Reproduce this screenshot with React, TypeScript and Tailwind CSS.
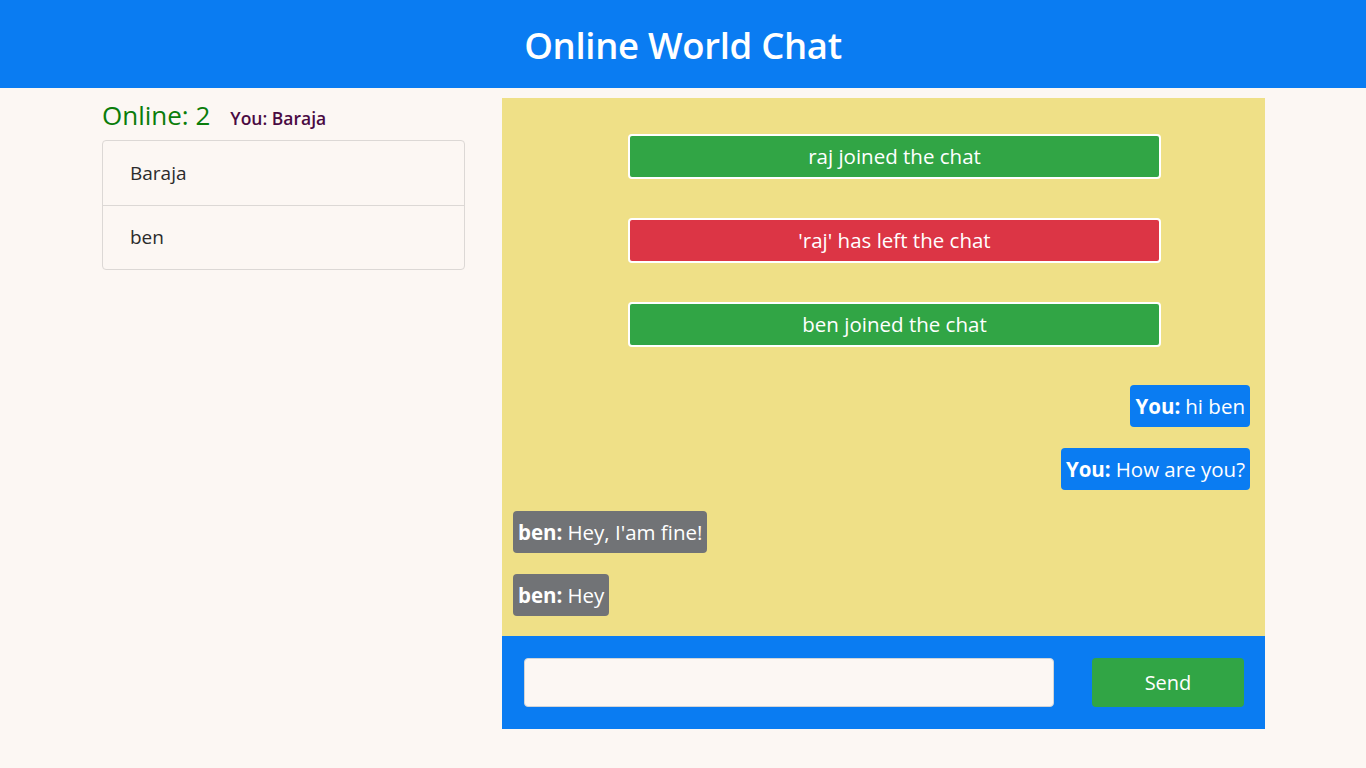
const users = ['Baraja', 'ben'];

const notices = [
  { text: 'raj joined the chat', tone: 'bg-[#31a545]' },
  { text: "'raj' has left the chat", tone: 'bg-[#dc3545]' },
  { text: 'ben joined the chat', tone: 'bg-[#31a545]' },
];

const messages = [
  { from: 'You', text: 'hi ben', mine: true },
  { from: 'You', text: 'How are you?', mine: true },
  { from: 'ben', text: "Hey, I'am fine!", mine: false },
  { from: 'ben', text: 'Hey', mine: false },
];

export default function App() {
  return (
    <div className="min-h-[768px] bg-[#fcf7f3] font-['Open_Sans',sans-serif]">
      <header className="h-[88px] bg-[#0a7cf2] flex items-center justify-center">
        <h1 className="text-[36.5px] font-semibold text-white tracking-[-0.3px] pt-[2px]">Online World Chat</h1>
      </header>

      <div className="flex pl-[102px] pt-[10px] gap-[37px]">
        <aside className="w-[363px]">
          <div className="flex items-baseline gap-[20px] h-[42px] leading-[34px]">
            <span className="text-[26px] text-[#0a7d0a]">Online: 2</span>
            <span className="text-[17.5px] font-semibold text-[#4a0a42]">You: Baraja</span>
          </div>
          <ul className="border border-[#dcd8d5] rounded-[4px]">
            {users.map((u, i) => (
              <li
                key={u}
                className={`h-[64px] flex items-center pl-[27px] text-[19px] text-[#2b2b2b] ${i > 0 ? 'border-t border-[#dcd8d5]' : ''}`}
              >
                {u}
              </li>
            ))}
          </ul>
        </aside>

        <main className="w-[763px]">
          <div className="bg-[#efe087] pt-[36px] pb-[21px] h-[538px] flex flex-col">
            <div className="flex flex-col gap-[39px] pl-[126px]">
              {notices.map((n) => (
                <div
                  key={n.text}
                  className={`w-[533px] h-[45px] border-[2px] border-white rounded-[4px] ${n.tone} flex items-center justify-center text-white text-[20.5px]`}
                >
                  {n.text}
                </div>
              ))}
            </div>
            <div className="flex flex-col gap-[21px] mt-[38px] pl-[11px] pr-[15px]">
              {messages.map((m, i) => (
                <div key={i} className={`flex ${m.mine ? 'justify-end' : 'justify-start'}`}>
                  <div
                    className={`h-[42px] px-[5px] rounded-[4px] flex items-center text-white text-[20.5px] ${m.mine ? 'bg-[#0a7cf2]' : 'bg-[#717376]'}`}
                  >
                    <b className="font-bold mr-[5px]">{m.from}:</b>
                    {m.text}
                  </div>
                </div>
              ))}
            </div>
          </div>
          <div className="h-[93px] bg-[#0a7cf2] flex items-center pl-[22px] pr-[21px] gap-[38px]">
            <input className="flex-1 h-[49px] bg-[#fcf7f3] border border-[#d0d4d8] rounded-[4px] outline-none px-3" />
            <button className="w-[152px] h-[49px] bg-[#31a545] rounded-[4px] text-white text-[20px]">Send</button>
          </div>
        </main>
      </div>
    </div>
  );
}
